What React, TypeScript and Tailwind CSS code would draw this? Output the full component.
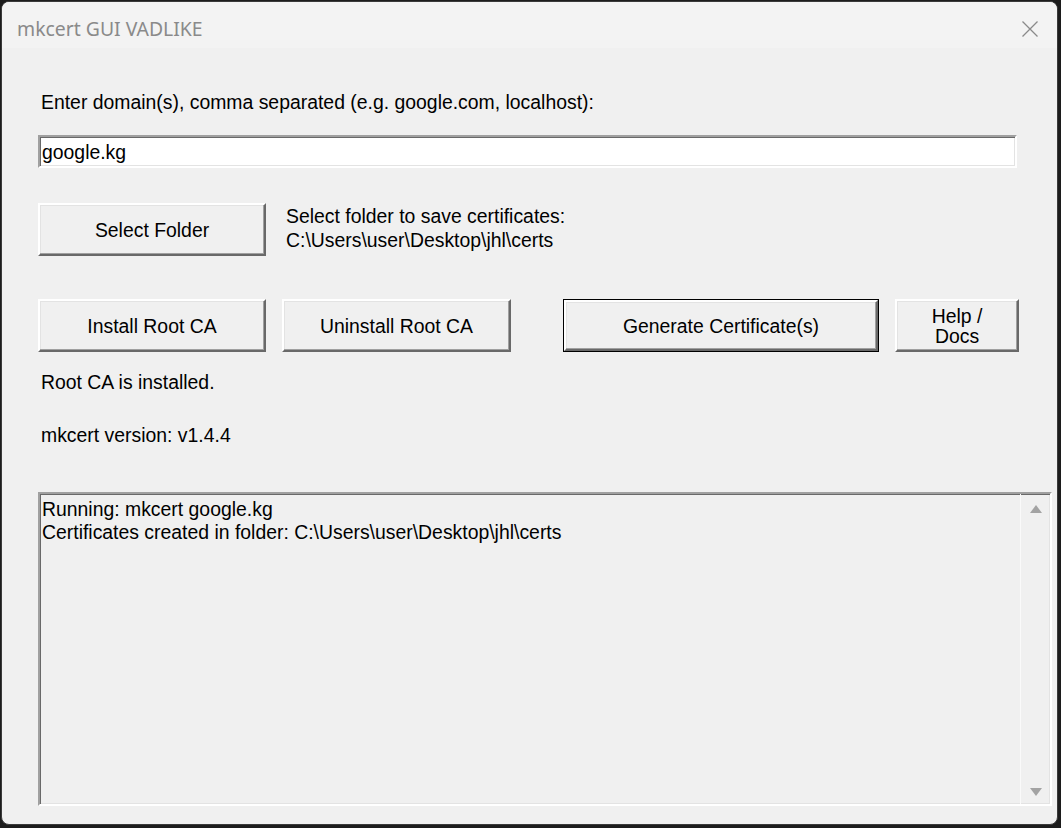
import React from "react";

const raised =
  "border-2 border-t-white border-l-white border-r-[#696969] border-b-[#696969] shadow-[inset_-1px_-1px_0_#a0a0a0,inset_1px_1px_0_#e3e3e3] bg-[#f0f0f0]";

const WinButton = ({
  label,
  className,
  isDefault,
}: {
  label: React.ReactNode;
  className?: string;
  isDefault?: boolean;
}) => {
  if (isDefault) {
    return (
      <div className={"border border-black " + (className ?? "")}>
        <button
          className={
            raised +
            " w-full h-full flex items-center justify-center text-[19.4px] leading-[20px] text-black"
          }
        >
          {label}
        </button>
      </div>
    );
  }
  return (
    <button
      className={
        raised +
        " flex items-center justify-center text-[19.4px] leading-[20px] text-black " +
        (className ?? "")
      }
    >
      {label}
    </button>
  );
};

export default function App() {
  return (
    <div className="w-[1061px] h-[828px] bg-[#1c1c1c] pt-[1px] pl-[1px]">
      <div
        className="w-[1057px] h-[824px] rounded-[8px] bg-[#f0f0f0] overflow-hidden border border-[#3a3a3a] flex flex-col"
        style={{ fontFamily: '"Liberation Sans", Arial, sans-serif' }}
      >
        {/* title bar */}
        <div className="h-[46px] bg-[#f3f3f3] flex items-start justify-between shrink-0">
          <div
            className="pl-[15px] pt-[14px] text-[19.4px] leading-[26px] text-[#8a8a8a]"
            style={{ fontFamily: '"Noto Sans", "Open Sans", sans-serif' }}
          >
            mkcert GUI VADLIKE
          </div>
          <div className="pt-[18px] pr-[18px]">
            <svg width="18" height="18" viewBox="0 0 18 18">
              <path
                d="M1.5 1.5 L16.5 16.5 M16.5 1.5 L1.5 16.5"
                stroke="#8a8a8a"
                strokeWidth="1.3"
                fill="none"
              />
            </svg>
          </div>
        </div>

        {/* client */}
        <div className="flex flex-col pl-[36px] text-black text-[19.4px] leading-[20px]">
          <div className="mt-[44px] pl-[3px]">
            Enter domain(s), comma separated (e.g. google.com, localhost):
          </div>

          <div className="mt-[23px] w-[979px] h-[33px] bg-white border-2 border-t-[#a0a0a0] border-l-[#a0a0a0] border-r-white border-b-white shadow-[inset_1px_1px_0_#696969,inset_-1px_-1px_0_#e3e3e3] flex items-center pl-[2px]">
            google.kg
          </div>

          <div className="mt-[35px] flex items-start">
            <WinButton label="Select Folder" className="w-[228px] h-[53px]" />
            <div className="ml-[20px] pt-[1px] leading-[24px]">
              <div>Select folder to save certificates:</div>
              <div>C:\Users\user\Desktop\jhl\certs</div>
            </div>
          </div>

          <div className="mt-[43px] flex items-center">
            <WinButton label="Install Root CA" className="w-[228px] h-[53px]" />
            <WinButton
              label="Uninstall Root CA"
              className="ml-[16px] w-[229px] h-[53px]"
            />
            <WinButton
              label="Generate Certificate(s)"
              isDefault
              className="ml-[52px] w-[316px] h-[53px]"
            />
            <WinButton
              label={
                <span className="text-center leading-[20px]">
                  Help /<br />
                  Docs
                </span>
              }
              className="ml-[16px] w-[124px] h-[53px]"
            />
          </div>

          <div className="mt-[20px] pl-[3px]">Root CA is installed.</div>
          <div className="mt-[33px] pl-[3px]">mkcert version: v1.4.4</div>

          {/* output log */}
          <div className="mt-[47px] w-[1014px] h-[314px] border-2 border-t-[#a0a0a0] border-l-[#a0a0a0] border-r-white border-b-white shadow-[inset_1px_1px_0_#696969,inset_-1px_-1px_0_#e3e3e3] bg-[#f0f0f0] flex">
            <div className="flex-1 pl-[2px] pt-[4px] leading-[23px]">
              <div>Running: mkcert google.kg</div>
              <div>Certificates created in folder: C:\Users\user\Desktop\jhl\certs</div>
            </div>
            <div className="w-[30px] border-l border-[#fafafa] flex flex-col items-center justify-between pt-[10px] pb-[7px]">
              <svg width="14" height="10" viewBox="0 0 14 10">
                <path d="M7 1 L13 9 L1 9 Z" fill="#a3a3a3" />
              </svg>
              <svg width="14" height="10" viewBox="0 0 14 10">
                <path d="M1 1 L13 1 L7 9 Z" fill="#a3a3a3" />
              </svg>
            </div>
          </div>
        </div>
      </div>
    </div>
  );
}
